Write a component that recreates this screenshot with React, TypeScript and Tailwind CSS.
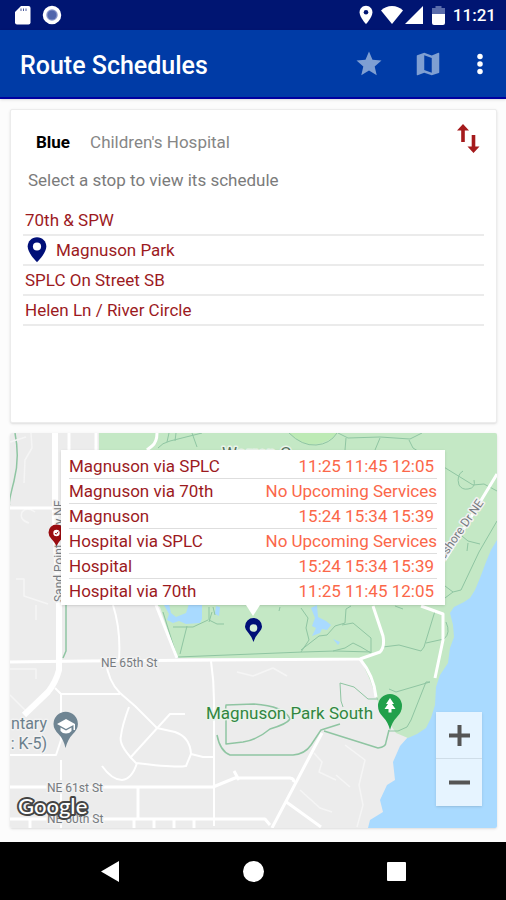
import React from "react";

interface Stop {
  name: string;
  current?: boolean;
}

interface Service {
  name: string;
  times: string[];
}

const stops: Stop[] = [
  { name: "70th & SPW" },
  { name: "Magnuson Park", current: true },
  { name: "SPLC On Street SB" },
  { name: "Helen Ln / River Circle" },
];

const services: Service[] = [
  { name: "Magnuson via SPLC", times: ["11:25", "11:45", "12:05"] },
  { name: "Magnuson via 70th", times: [] },
  { name: "Magnuson", times: ["15:24", "15:34", "15:39"] },
  { name: "Hospital via SPLC", times: [] },
  { name: "Hospital", times: ["15:24", "15:34", "15:39"] },
  { name: "Hospital via 70th", times: ["11:25", "11:45", "12:05"] },
];

const PIN = "M12 2C8.13 2 5 5.13 5 9c0 5.25 7 13 7 13s7-7.75 7-13c0-3.87-3.13-7-7-7z";

function StatusBar() {
  return (
    <div className="flex h-[30px] items-center justify-between bg-[#001572] pl-[14px] pr-[10px] text-white">
      <div className="flex items-center gap-[11px]">
        <svg className="h-5 w-[17px]" viewBox="0 0 17 20" fill="currentColor">
          <path d="M7 1h7.500q2 0 2 2v14.500q0 2-2 2h-11.500q-2 0-2-2V7z" />
          <path d="M7 3.500v2.500M9.500 3.500v2.500M12 3.500v2.500" stroke="#001572" strokeWidth="1" opacity="0.7" />
        </svg>
        <svg className="h-5 w-5" viewBox="0 0 20 20">
          <circle cx="10" cy="10" r="7.500" fill="#8b98cb" stroke="#fff" strokeWidth="3.500" />
          <circle cx="10" cy="10" r="4.500" fill="#5166ac" />
        </svg>
      </div>
      <div className="flex items-center">
        <svg className="mr-1 h-[22px] w-[22px]" viewBox="0 0 24 24" fill="currentColor">
          <path d={PIN} />
          <circle cx="12" cy="9" r="2.500" fill="#001572" />
        </svg>
        <svg className="mr-[2px] h-[18px] w-[22px]" viewBox="0 0 22 18" fill="currentColor">
          <path d="M11 18L0 4.500Q4.500 0 11 0T22 4.500z" />
        </svg>
        <svg className="mr-[9px] h-[18px] w-[18px]" viewBox="0 0 18 18" fill="currentColor">
          <path d="M18 0v18H0z" />
        </svg>
        <svg className="mr-2 h-[19px] w-[13px]" viewBox="0 0 13 19" fill="currentColor">
          <path d="M3.500 0h6v2H13v7H0V2h3.500z" fill="#5a6cab" />
          <path d="M0 8h13v9q0 2-2 2H2q-2 0-2-2z" />
        </svg>
        <span className="text-[17px] font-medium leading-5">11:21</span>
      </div>
    </div>
  );
}

function AppBar() {
  return (
    <header className="flex h-[69px] items-center border-b-2 border-[#0000a0] bg-[#003ba6] pl-5 pr-[11px] text-white shadow-sm">
      <h1 className="flex-1 pt-1 text-[25px] font-medium leading-8">Route Schedules</h1>
      <button aria-label="Favourites" className="mr-[29px] text-[#7f9fd2]">
        <svg className="h-[30px] w-[30px]" viewBox="0 0 24 24" fill="currentColor">
          <path d="M12 17.270L18.180 21l-1.640-7.030L22 9.240l-7.190-.61L12 2 9.190 8.630 2 9.240l5.460 4.730L5.820 21z" />
        </svg>
      </button>
      <button aria-label="Map" className="mr-[22px] text-[#7f9fd2]">
        <svg className="h-[30px] w-[30px]" viewBox="0 0 24 24" fill="currentColor">
          <path d="M20.500 3l-.16.03L15 5.100 9 3 3.360 4.900c-.21.07-.36.25-.36.48V20.500c0 .28.22.5.5.5l.16-.03L9 18.900l6 2.100 5.640-1.900c.21-.07.36-.25.36-.48V3.500c0-.28-.22-.5-.5-.5zM15 19l-6-2.110V5l6 2.110V19z" />
        </svg>
      </button>
      <button aria-label="More options">
        <svg className="h-[30px] w-[30px]" viewBox="0 0 24 24" fill="currentColor">
          <circle cx="12" cy="6" r="2.200" />
          <circle cx="12" cy="12" r="2.200" />
          <circle cx="12" cy="18" r="2.200" />
        </svg>
      </button>
    </header>
  );
}

function StopsCard() {
  return (
    <section className="min-h-[314px] rounded-[2px] border border-[#ececec] bg-white px-3 pt-3 shadow">
      <div className="flex items-start">
        <div className="flex flex-1 items-baseline gap-5 pl-[13px] pt-2">
          <h2 className="text-[17px] font-bold leading-6 text-black">Blue</h2>
          <span className="text-[17px] leading-6 text-[#868686]">Children's Hospital</span>
        </div>
        <button aria-label="Reverse direction" className="mr-1 mt-[2px]">
          <svg className="h-[30px] w-6" viewBox="0 0 24 30" fill="#a51a1c">
            <path d="M7 0L13 6.500H8.800V18H5.200V6.500H1z" />
            <path d="M17.500 29l-6-6.500h4.200V11h3.600v11.500h4.200z" />
          </svg>
        </button>
      </div>
      <p className="mt-[14px] pl-[5px] text-[17px] leading-6 text-[#7b7b7b]">Select a stop to view its schedule</p>
      <ul className="mt-[14px]">
        {stops.map((stop) => (
          <li key={stop.name} className="border-b-2 border-[#ebebeb]">
            <button className="flex h-[28px] w-full items-center pl-[2px] text-left text-[17px] leading-6 text-[#9c1a1e]">
              {stop.current && (
                <svg className="-ml-[2px] mr-[5px] h-[28px] w-[28px]" viewBox="0 0 24 24" fill="#000f78">
                  <path d="M12 1C7.500 1 4 4.500 4 9c0 5.600 8 13.500 8 13.500s8-7.900 8-13.500c0-4.500-3.500-8-8-8z" />
                  <circle cx="12" cy="9" r="3.500" fill="#fff" />
                </svg>
              )}
              {stop.name}
            </button>
          </li>
        ))}
      </ul>
    </section>
  );
}

function MapDrawing() {
  return (
    <svg
      className="absolute inset-0 h-full w-full font-['Roboto',sans-serif]"
      viewBox="10 433 487 395"
      preserveAspectRatio="xMidYMid slice"
      fill="none"
      strokeLinejoin="round"
    >
      <rect x="10" y="433" width="487" height="395" fill="#ececec" />
      {/* water */}
      <path d="M497 530V828H368L370 820 383 812 380 800 387 785 395 780 393 762 400 746 408 737 400 680 450 600z" fill="#a9daff" />
      {/* park */}
      <path
        d="M99 433H497V540L491 550 486 562 480 578 475 590 470 598 464 602 454 607 450 613 453 625 454 637 450 648 448 663 440 675 436 687 435 705 431 718 426 728 417 734 408 738 396 733 382 712 376 697 370 680 360 658H177L160 607 99 560z"
        fill="#c4e8c5"
      />
      <path d="M289 433Q302 446 316 444T337 433z" fill="#bdeab5" />
      {/* ponds */}
      <path d="M164 605l5 9 -2 6 6 3 6-2 7 3 14-1 2-4V604h-13l-3 9-10 4-5-4-2-9zM216 606l4 1-1 9-4-2z" fill="#a9daff" />
      <path d="M311 608l6-3 1 12 8 4 5 4-4 5-5-1-2 4-8 3 4-8-4-2 3-8zM333 639l7 3-2 3z" fill="#a9daff" />

      {/* paths */}
      <g stroke="#8fc5a2" strokeWidth="1">
        <path d="M15 433q5 25-1 48t-4 24M66 605v46l-3 7" strokeWidth="1.500" />
        <path d="M158 448q4-5 12-7l20-5 12-3M169 433l-2 9M176 433l-1 8M192 433l5 14" />
        <path d="M289 433q13 13 27 12t21-12M338 433l10 5 32-1 30 2 12-6M380 438l-5 12M346 438l-1 12M409 440l4 8 60 37 11-1 13 7M463 471q-7 4-4 14 3 5 9 4 8-1 6-9" />
        <path d="M497 521l-18 31-18 38-8 2-8-6M480 544l-12-3-6-5M468 543l-1 8M453 592l-8 6" />
        <path d="M163 612l14 45 76-3 50-2 32-1 37 1M209 607v13l8 4 7 0M208 620l-15 7-20 0M187 626l-7 28M212 612l-3 10M213 607l2 8" />
        <path d="M301 608l7 10-2 10 3 12-8 12M280 607l-1 4M301 650l18-14 8-1 8-9 10-3 1-14 5-3M342 625l11-2 18 15 0 13M333 651l12-3 8-5 8 4 10 6M383 647l16-2 22 6 3-4 11-36M446 622q5 11-2 17l-18 4M395 606l8 3" />
        <path d="M389 689l7 3 34-10-4 0-15 38-4 7-9 4-10 0" />
        <path d="M343 707l-2-6-1-18 14 4 14 12 10 0" />
        <path d="M225 716l1-11 28-1q30 2 36 15-3 5-20 10-13 11-27 13l-17 2 0-30M217 735q3 16 13 20l63 0q12-1 18-10l10-15 19-6M324 731l54 17q8-1 8-6l3-12" strokeWidth="1.500" />
      </g>

      {/* minor streets */}
      <g stroke="#f5f5f5" strokeWidth="1.500">
        <path d="M31 433l1 15-7 12-1 23M10 442l16-5M35 512q-8-6-13 0-3 8 7 11M16 579l8 0v17l24 8M36 605v15M10 669h26v10M10 695l18 18M237 672l16 4 20-8 14 8M314 753l8 9-3 10 17 8M345 745l20 15-6 25 4 20-6 22M300 790l20 18 12 4M336 775l14 12" />
      </g>

      {/* roads */}
      <g stroke="#fff" strokeWidth="3">
        <path d="M55 433V520L59 605V670Q56 682 48 692L24 715" strokeWidth="6" />
        <path d="M69 433v17M96 433v17M157 433q0 9-5 13l-5 4" />
        <path d="M10 508h45M10 662l75-1 275-2 20-7q5-5 3-16l-10-30" strokeWidth="3" />
        <path d="M497 474L445 560M421 606l22 8v26l-8 38M156 605l21 53M360 659q14 17 16 38" />
        <path d="M113 605q8 25 6 55M106 661q2 20 14 32l15 13 22 22 18 4q15 5 16 22l-5 12q-10 2-50-3-18-18-15-27 1-10 8-29M55 688l6 6h59M61 694v46l-5 15H10M61 760v20M61 790v38" strokeWidth="2" />
        <path d="M130 758l40-44h15M191 754l12 3h10M137 763q-5 16-15 17-10 0-20-14M211 661q3 20 3 40v125" strokeWidth="2" />
        <path d="M10 787h203l22-9h55q5 1 3 4M138 788v30M10 819h255l5 6M30 819v9M134 819v9M154 819v9M174 819v9M194 819v9M239 780l-5-9M322 733l-50 95M285 801l36 26" />
      </g>

      {/* labels */}
      <g fill="#777b80" stroke="#f2f2f2" strokeWidth="3" style={{ paintOrder: "stroke" }}>
        <text x="101" y="667" fontSize="12">NE 65th St</text>
        <text x="47" y="792" fontSize="12">NE 61st St</text>
        <text x="47" y="823" fontSize="12">NE 60th St</text>
        <text transform="translate(63 602) rotate(-90)" fontSize="12">Sand Point Way NE</text>
        <text transform="translate(484 503) rotate(-55)" fontSize="12" textAnchor="end">Lakeshore Dr NE</text>
      </g>
      <g fill="#6b7f8c" stroke="#f2f2f2" strokeWidth="3" fontSize="16" style={{ paintOrder: "stroke" }}>
        <text x="47" y="729" textAnchor="end">ntary</text>
        <text x="47" y="749" textAnchor="end">: K-5)</text>
      </g>
      <g fill="#31863f" stroke="#e9f3ea" strokeWidth="3" fontSize="17" style={{ paintOrder: "stroke" }}>
        <text x="206" y="719">Magnuson Park South</text>
        <text x="222" y="459" fill="#55705a">Warren G</text>
      </g>

      {/* school */}
      <path d="M65.500 748q-2-9-7-14-5-5-5-10a12.200 12.200 0 0 1 24.400 0q0 5-5 10-5 5-7.400 14z" fill="#6f8593" />
      <path d="M57 724l9-5 9 5v6h-1.500v-5L66 729zM60.500 727.500l5.500 3 5.500-3v3.500q-2 2.500-5.500 2.500t-5.500-2.500z" fill="#fff" />
      {/* park south */}
      <path d="M390 730q-2-8-7-13-5-5-5-11a12 12 0 0 1 24 0q0 6-5 11-5 5-7 13z" fill="#21a04b" />
      <path d="M390 698l4 6h-2l3.500 5h-4v3.500h-3V709h-4l3.500-5h-2z" fill="#fff" />
      {/* other stop */}
      <path d="M56.500 546q-2-4-5-7-3-3-3-6.500a8 8 0 0 1 16 0q0 3.500-3 6.500-3 3-5 7z" fill="#9a0c10" />
      <circle cx="56.500" cy="533" r="3.200" fill="#fff" />
      <path d="M55 533l1.200 1.300 2-2.600" stroke="#9a0c10" />
      {/* selected stop */}
      <path
        d="M253.500 642q-1.500-5-5-9-3.500-4-3.500-6.500a8.500 8.500 0 0 1 17 0q0 2.500-3.500 6.500-3.500 4-5 9z"
        fill="#000f78"
      />
      <circle cx="253.500" cy="628" r="3.800" fill="#d7efd8" />

      <text
        x="18"
        y="814"
        fontSize="22"
        fontWeight="500"
        fontFamily="Lato, sans-serif"
        fill="#fff"
        stroke="#444"
        strokeWidth="4"
        style={{ paintOrder: "stroke" }}
      >
        Google
      </text>
    </svg>
  );
}

function ServicesPopup() {
  return (
    <div className="absolute left-[51px] top-[17px] w-[384px] bg-white px-2 pb-[2px] pt-1 shadow">
      <table className="w-full border-collapse text-[17px] leading-6">
        <tbody>
          {services.map((service) => (
            <tr key={service.name} className="border-b border-[#dedede] last:border-b-0">
              <th scope="row" className="p-0 text-left font-normal text-[#9c1a1e]">
                {service.name}
              </th>
              <td className={service.times.length ? "p-0 pr-[3px] text-right text-[#fb6749]" : "p-0 text-right text-[#fb6749]"}>
                {service.times.length ? service.times.join(" ") : "No Upcoming Services"}
              </td>
            </tr>
          ))}
        </tbody>
      </table>
      <svg className="absolute left-[185px] top-full h-[11px] w-[14px]" viewBox="0 0 14 11" fill="#fff">
        <path d="M0 0h14L7 11z" />
      </svg>
    </div>
  );
}

function MapCard() {
  return (
    <section className="relative min-h-[395px] flex-1 overflow-hidden rounded-[2px] shadow">
      <MapDrawing />
      <ServicesPopup />
      <div className="absolute bottom-[22px] right-[15px] flex w-[46px] flex-col divide-y divide-[#cfdde8] bg-[#e6f4ff] text-[#555] shadow">
        <button aria-label="Zoom in" className="flex h-[47px] items-center justify-center">
          <svg className="h-[21px] w-[21px]" viewBox="0 0 21 21" stroke="currentColor" strokeWidth="4">
            <path d="M0 10.500h21M10.500 0v21" />
          </svg>
        </button>
        <button aria-label="Zoom out" className="flex h-[47px] items-center justify-center">
          <svg className="h-[21px] w-[21px]" viewBox="0 0 21 21" stroke="currentColor" strokeWidth="4">
            <path d="M0 10.500h21" />
          </svg>
        </button>
      </div>
    </section>
  );
}

function NavigationBar() {
  return (
    <nav className="flex h-[58px] items-center justify-center gap-[122px] bg-black text-white">
      <button aria-label="Back">
        <svg className="h-[21px] w-[21px]" viewBox="0 0 21 21" fill="currentColor">
          <path d="M19 0v21L1 10.500z" />
        </svg>
      </button>
      <button aria-label="Home">
        <svg className="h-[21px] w-[21px]" viewBox="0 0 21 21" fill="currentColor">
          <circle cx="10.500" cy="10.500" r="10.500" />
        </svg>
      </button>
      <button aria-label="Recent apps">
        <svg className="h-[21px] w-[21px]" viewBox="0 0 21 21" fill="currentColor">
          <rect x="1" y="1" width="19" height="19" rx="1" />
        </svg>
      </button>
    </nav>
  );
}

export default function App() {
  return (
    <div className="flex min-h-screen flex-col bg-[#fcfcfc] font-['Roboto',sans-serif]">
      <StatusBar />
      <AppBar />
      <main className="flex flex-1 flex-col gap-[10px] pb-[14px] pl-[10px] pr-[9px] pt-[10px]">
        <StopsCard />
        <MapCard />
      </main>
      <NavigationBar />
    </div>
  );
}
